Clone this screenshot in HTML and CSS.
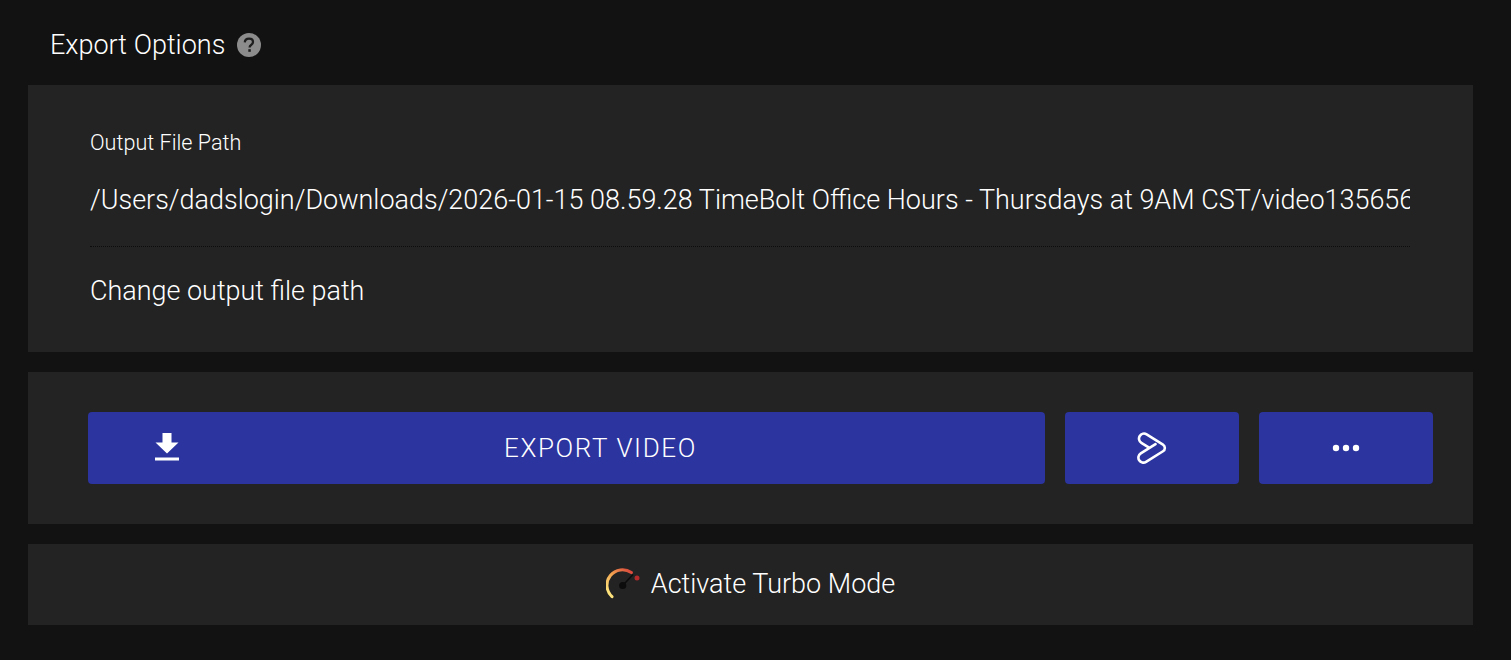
FILE: index.html
```html
<!DOCTYPE html>
<html lang="en">
<head>
    <meta charset="UTF-8">
    <meta name="viewport" content="width=device-width, initial-scale=1.0">
    <title>Export Options</title>
    <link rel="stylesheet" href="styles.css">
</head>
<body>
    <div class="page-title">
        <h1>Export Options</h1>
        <svg class="help-icon" viewBox="0 0 24 24" width="24" height="24">
            <circle cx="12" cy="12" r="12" fill="#8c8c8c"/>
            <path d="M7.800 9.400c.1-2.300 1.800-3.700 4.200-3.700s4 1.400 4 3.300c0 1.500-.8 2.300-1.900 3-1.100.7-1.500 1.200-1.500 2.500" fill="none" stroke="#1e1e1e" stroke-width="2.300"/>
            <rect x="11.300" y="16.200" width="2.500" height="2.600" fill="#1e1e1e"/>
        </svg>
    </div>

    <section class="panel path-panel">
        <label class="path-label">Output File Path</label>
        <div class="path-value">/Users/dadslogin/Downloads/2026-01-15 08.59.28 TimeBolt Office Hours - Thursdays at 9AM CST/video1356565670_recording.mp4</div>
        <div class="path-change">Change output file path</div>
    </section>

    <section class="panel actions-panel">
        <button class="btn btn-export">
            <svg class="export-icon" viewBox="0 0 24 28" width="24" height="28">
                <path d="M7.500 0h9v9.500h7L12 20.500.5 9.500h7z" fill="#fff"/>
                <rect x="0" y="24.500" width="24" height="3" fill="#fff"/>
            </svg>
            <span>EXPORT VIDEO</span>
        </button>
        <button class="btn btn-small">
            <svg viewBox="0 0 30 33" width="30" height="33" fill="none" stroke="#fff" stroke-width="2.600" stroke-linecap="round" stroke-linejoin="round">
                <path d="M12.460 15.900L4.350 10.840A5 5 0 0 1 9.650 2.360L26 12.580A3.930 3.930 0 0 1 26 19.250L9.050 29.840A5 5 0 0 1 3.750 21.360L18.500 12.140"/>
            </svg>
        </button>
        <button class="btn btn-small">
            <svg viewBox="0 0 28 8" width="28" height="8" fill="#fff">
                <circle cx="4" cy="4" r="3.200"/>
                <circle cx="14" cy="4" r="3.200"/>
                <circle cx="24" cy="4" r="3.200"/>
            </svg>
        </button>
    </section>

    <section class="panel turbo-panel">
        <svg class="turbo-icon" viewBox="0 0 36 32" width="36" height="32" fill="none">
            <defs>
                <linearGradient id="gauge" x1="0" y1="1" x2="1" y2="0">
                    <stop offset="0.100" stop-color="#fee57e"/>
                    <stop offset="0.500" stop-color="#f3a650"/>
                    <stop offset="1" stop-color="#d8423a"/>
                </linearGradient>
            </defs>
            <path d="M6 28.700A15.500 15.500 0 0 1 25.400 4.600" stroke="url(#gauge)" stroke-width="3" stroke-linecap="round"/>
            <path d="M16.700 17.500 27 6.500" stroke="#0c0c0c" stroke-width="1.600"/>
            <circle cx="16.700" cy="17.500" r="3.600" fill="#0c0c0c"/>
            <circle cx="31" cy="10" r="2.500" fill="#b52a2a"/>
        </svg>
        <span>Activate Turbo Mode</span>
    </section>
</body>
</html>
```

FILE: styles.css
```css
body {
    font-family: Roboto, 'Liberation Sans', sans-serif;
    margin: 0;
    height: 660px;
    overflow: hidden;
    background-color: #121212;
    color: #fff;
}
.page-title {
    display: flex;
    align-items: center;
    gap: 12px;
    height: 85px;
    padding: 5px 0 0 50px;
    box-sizing: border-box;
}
.page-title h1 {
    margin: 0;
    font-size: 27px;
    font-weight: 300;
}
.panel {
    margin: 0 38px 20px 28px;
    background-color: #232323;
}
.path-panel {
    height: 267px;
    padding: 44px 63px 0 62px;
    box-sizing: border-box;
}
.path-label {
    display: block;
    font-size: 21.6px;
    line-height: 27px;
    font-weight: 300;
}
.path-value {
    margin-top: 27px;
    padding-bottom: 29px;
    font-size: 26.98px;
    line-height: 34px;
    font-weight: 300;
    white-space: nowrap;
    overflow: hidden;
    border-bottom: 1px dotted #0c0c0c;
}
.path-change {
    margin-top: 27px;
    font-size: 26.95px;
    line-height: 34px;
    font-weight: 300;
}
.actions-panel {
    display: flex;
    gap: 20px;
    padding: 40px 40px 40px 60px;
}
.btn {
    display: flex;
    align-items: center;
    justify-content: center;
    height: 72px;
    padding: 0;
    border: none;
    border-radius: 4px;
    background-color: #2b349f;
    color: #fff;
    font-family: inherit;
}
.btn-export {
    position: relative;
    flex: 1;
    font-size: 26px;
    font-weight: 300;
    letter-spacing: 1.600px;
}
.btn-export span {
    margin-left: 68px;
}
.export-icon {
    position: absolute;
    left: 67px;
    top: 21px;
}
.btn-small {
    flex: 0 0 174px;
}
.turbo-panel {
    display: flex;
    align-items: center;
    justify-content: center;
    gap: 9px;
    height: 81px;
    margin-bottom: 0;
    padding-bottom: 1px;
    box-sizing: border-box;
    font-size: 27px;
    font-weight: 300;
}
```
